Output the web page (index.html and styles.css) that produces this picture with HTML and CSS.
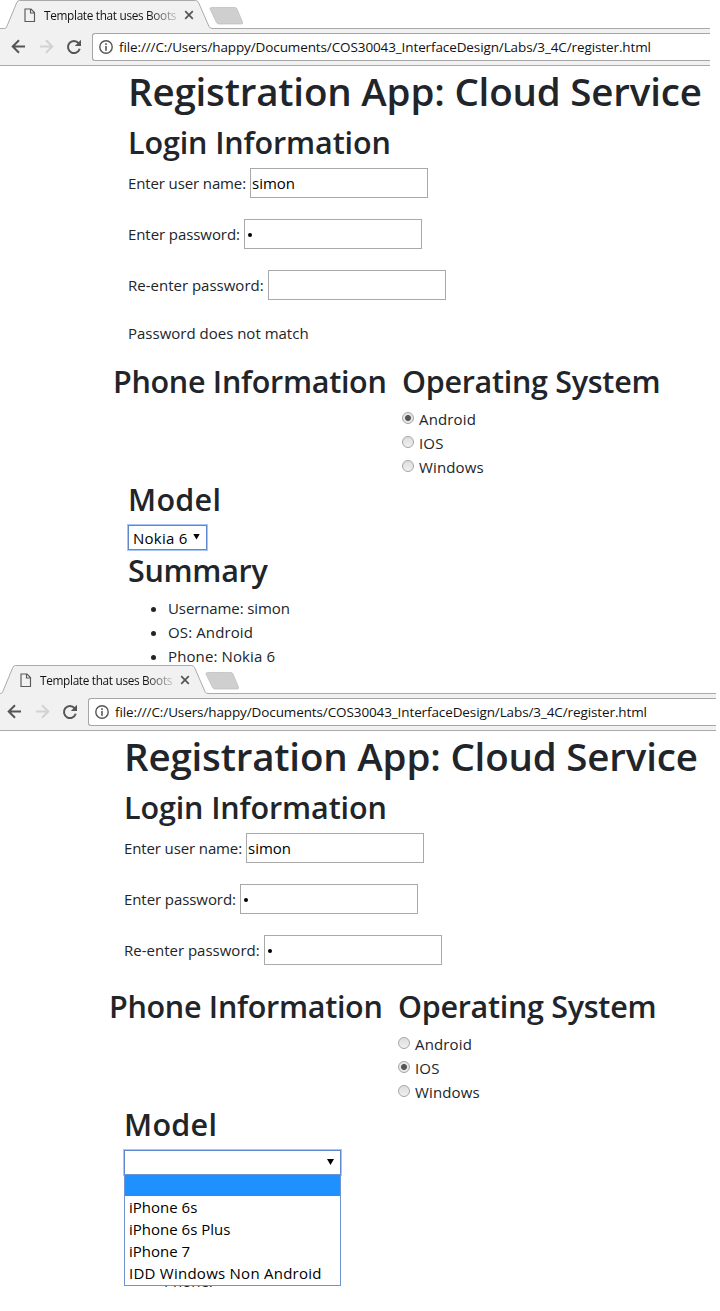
FILE: index.html
```
<!DOCTYPE html>
<html lang="en">
<head>
<meta charset="utf-8">
<title>Template that uses Bootstrap</title>
<link rel="stylesheet" href="styles.css">
</head>
<body>
<svg width="0" height="0" class="defs">
  <symbol id="tab-shape" viewBox="0 0 244 29"><path d="M0 28.500H4.500Q6 28.500 6.800 26.500L16.800 2.500Q17.500.500 19.500.500H195.500Q197.500.500 198.500 2.500L209 26.500Q210 28.500 212 28.500H244V29H0Z" fill="#f1f1f1"/><path d="M0 28.500H4.500Q6 28.500 6.800 26.500L16.800 2.500Q17.500.500 19.500.500H195.500Q197.500.500 198.500 2.500L209 26.500Q210 28.500 212 28.500H244" fill="none" stroke="#aaa"/><path d="M211.500 7.500H235Q236.500 7.500 237 9L242.500 22Q243 24 241.500 24H219Q217.500 24 216.500 22.500L210 9Q209.500 7.500 211.500 7.500Z" fill="#cfcfcf" stroke="#bcbcbc" stroke-width=".7"/></symbol>
  <symbol id="page" viewBox="0 0 12 15"><path d="M1 1H7L10.500 4.500V13.500H1ZM6.500 1V5H10.500" fill="none" stroke="#5a5a5a" stroke-width="1.150"/></symbol>
  <symbol id="close" viewBox="0 0 10 10"><path d="M1.200 1.200 8.800 8.800M8.800 1.200 1.200 8.800" stroke="#555" stroke-width="1.700"/></symbol>
  <symbol id="back" viewBox="0 0 15 15"><path d="M14 7.500H1.500M8 1.200 1.700 7.500 8 13.800" fill="none" stroke="currentColor" stroke-width="2"/></symbol>
  <symbol id="reload" viewBox="0 0 16 16"><path d="M12.600 4.200A6 6 0 1 0 13.700 9.800" fill="none" stroke="#555" stroke-width="2"/><path d="M15 .800V7H8.800Z" fill="#555"/></symbol>
  <symbol id="info" viewBox="0 0 14 14"><circle cx="7" cy="7" r="6.200" fill="none" stroke="#555" stroke-width="1.400"/><path d="M7 6V10.700M7 3.300V4.900" stroke="#555" stroke-width="1.600"/></symbol>
</svg>

<section class="window first">
  <header class="chrome">
    <div class="tabs"><svg class="tab-bg"><use href="#tab-shape"/></svg><div class="tab"><svg class="i-page"><use href="#page"/></svg><span class="tab-title">Template that uses Boots</span><svg class="i-close"><use href="#close"/></svg></div></div>
    <div class="toolbar"><svg class="i-nav"><use href="#back"/></svg><svg class="i-nav forward"><use href="#back"/></svg><svg class="i-reload"><use href="#reload"/></svg><div class="address"><svg class="i-info"><use href="#info"/></svg><span class="url">file:///C:/Users/happy/Documents/COS30043_InterfaceDesign/Labs/3_4C/register.html</span></div></div>
  </header>
  <main class="content">
    <h1>Registration App: Cloud Service</h1>
    <h2>Login Information</h2>
    <div class="field"><span class="label l-user">Enter user name:</span><div class="input">simon</div></div>
    <div class="field"><span class="label l-pass">Enter password:</span><div class="input"><i class="dot"></i></div></div>
    <div class="field"><span class="label l-re">Re-enter password:</span><div class="input"></div></div>
    <p class="message">Password does not match</p>
    <div class="row">
      <h2 class="phone">Phone Information</h2>
      <div class="os"><h2>Operating System</h2>
        <div class="option"><i class="radio on"></i><span>Android</span></div>
        <div class="option"><i class="radio"></i><span>IOS</span></div>
        <div class="option"><i class="radio"></i><span>Windows</span></div>
      </div>
    </div>
    <h2 class="model">Model</h2>
    <div class="select small"><span>Nokia 6</span><i class="arrow"></i></div>
    <h2 class="summary">Summary</h2>
    <ul><li class="tight">Username: simon</li><li class="airy">OS: Android</li><li class="airy">Phone: Nokia 6</li></ul>
  </main>
</section>

<section class="window second">
  <header class="chrome">
    <div class="tabs"><svg class="tab-bg"><use href="#tab-shape"/></svg><div class="tab"><svg class="i-page"><use href="#page"/></svg><span class="tab-title">Template that uses Boots</span><svg class="i-close"><use href="#close"/></svg></div></div>
    <div class="toolbar"><svg class="i-nav"><use href="#back"/></svg><svg class="i-nav forward"><use href="#back"/></svg><svg class="i-reload"><use href="#reload"/></svg><div class="address"><svg class="i-info"><use href="#info"/></svg><span class="url">file:///C:/Users/happy/Documents/COS30043_InterfaceDesign/Labs/3_4C/register.html</span></div></div>
  </header>
  <main class="content">
    <h1>Registration App: Cloud Service</h1>
    <h2>Login Information</h2>
    <div class="field"><span class="label l-user">Enter user name:</span><div class="input">simon</div></div>
    <div class="field"><span class="label l-pass">Enter password:</span><div class="input"><i class="dot"></i></div></div>
    <div class="field"><span class="label l-re">Re-enter password:</span><div class="input"><i class="dot"></i></div></div>
    <div class="row">
      <h2 class="phone">Phone Information</h2>
      <div class="os"><h2>Operating System</h2>
        <div class="option"><i class="radio"></i><span>Android</span></div>
        <div class="option"><i class="radio on"></i><span>IOS</span></div>
        <div class="option"><i class="radio"></i><span>Windows</span></div>
      </div>
    </div>
    <h2 class="model">Model</h2>
    <div class="select wide"><i class="arrow"></i>
      <div class="menu"><div class="item active"></div><div class="item">iPhone 6s</div><div class="item">iPhone 6s Plus</div><div class="item">iPhone 7</div><div class="item loose">IDD Windows Non Android</div></div>
    </div>
    <ul class="covered"><li>Phone:</li></ul>
  </main>
</section>
</body>
</html>
```
FILE: styles.css
```
* { box-sizing: border-box; }
body { margin: 0; width: 720px; height: 1311px; overflow: hidden; background: #fff; color: #212529; font: 15px/24px "Open Sans", "Noto Sans", sans-serif; }
.defs { position: absolute; }
svg { display: block; flex: none; }
.window { overflow: hidden; }
.first { width: 710px; height: 665px; }
.second { width: 716px; height: 646px; }
.second .chrome, .second .content { margin-left: -4px; }
.chrome { height: 66px; border-bottom: 1px solid #aaa; }
.tabs { position: relative; height: 28px; }
.tabs::after { content: ""; position: absolute; left: 243px; right: 0; top: 28px; height: 1px; background: #aaa; }
.tab-bg { position: absolute; left: 0; top: 0; width: 244px; height: 29px; }
.tab { position: relative; display: flex; align-items: center; height: 30px; padding-left: 24px; }
.i-page { width: 12px; height: 15px; }
.tab-title { width: 133px; margin-left: 8px; font-size: 11.8px; line-height: 20px; letter-spacing: -.32px; white-space: nowrap; background: linear-gradient(90deg, #111 105px, #bbb 131px); color: transparent; -webkit-background-clip: text; background-clip: text; }
.i-close { width: 10px; height: 10px; margin-left: 7px; }
.toolbar { display: flex; align-items: center; height: 37px; padding-left: 11px; background: #f1f1f1; }
.i-nav { width: 15px; height: 15px; color: #555; margin-right: 13px; }
.forward { color: #d2d2d2; transform: scaleX(-1); }
.i-reload { width: 16px; height: 16px; margin: 0 10px 0 -1px; }
.address { display: flex; align-items: center; flex: 1; min-width: 0; height: 28px; margin-top: 1px; padding-left: 6px; background: #fff; border: 1px solid #a6a6a6; border-right: 0; border-radius: 3px 0 0 3px; }
.i-info { width: 14px; height: 14px; margin-right: 6px; }
.url { color: #111; font-size: 13.5px; letter-spacing: -.11px; white-space: nowrap; }
.content { padding-left: 128px; }
h1, h2 { margin: 0; font-weight: 550; white-space: nowrap; }
h1 { height: 56px; font-size: 38.5px; line-height: 50px; letter-spacing: -.18px; }
h2 { height: 46px; font-size: 30.5px; line-height: 41px; letter-spacing: -.12px; }
.model { letter-spacing: .3px; }
.phone, .os h2, .summary { letter-spacing: -.29px; }
.field { display: flex; align-items: center; height: 30px; margin-bottom: 21px; }
.label { white-space: nowrap; }
.l-user { width: 122px; letter-spacing: -.12px; }
.l-pass { width: 116px; letter-spacing: -.08px; }
.l-re { width: 140px; }
.input { display: flex; align-items: center; width: 178px; height: 30px; padding: 0 1px; border: 1px solid #a9a9a9; color: #000; }
.dot { width: 4px; height: 4px; margin: 1px 0 0 2px; border-radius: 50%; background: #000; }
.message { margin: 0; height: 40px; }
.row { display: flex; margin-left: -15px; }
.phone { width: 289px; }
.option { display: flex; height: 24px; letter-spacing: .15px; }
.radio { width: 12px; height: 12px; margin: 5px 5px 0 0; border: 1px solid #a5a5a5; border-radius: 50%; background: linear-gradient(#ddd, #f0f0f0); }
.on { background: radial-gradient(circle, #555 0 2.500px, #e7e7e7 3.500px); }
.select { position: relative; display: flex; align-items: center; justify-content: space-between; height: 25px; background: #fff; border: 1px solid #5f86cf; box-shadow: 0 0 0 1px #a9c5f5; color: #000; padding: 0 6px 0 4px; }
.small { width: 79px; letter-spacing: .25px; }
.wide { width: 217px; }
.arrow { margin: -2px 0 0 auto; width: 7px; height: 6px; background: #000; clip-path: polygon(0 0, 100% 0, 50% 100%); }
.wide .arrow { margin-top: -1px; }
.menu { position: absolute; z-index: 1; left: -1px; top: 23px; width: 217px; height: 112px; border: 1px solid #6f94d4; background: #fff; }
.item { height: 22px; padding-left: 4px; line-height: 22px; white-space: nowrap; }
.active { height: 21px; background: #1e90ff; }
.loose { letter-spacing: .25px; }
ul { margin: 0; padding-left: 40px; }
.tight { letter-spacing: -.1px; }
.airy { letter-spacing: .12px; }
.covered { padding-top: 94px; list-style: none; }
```
